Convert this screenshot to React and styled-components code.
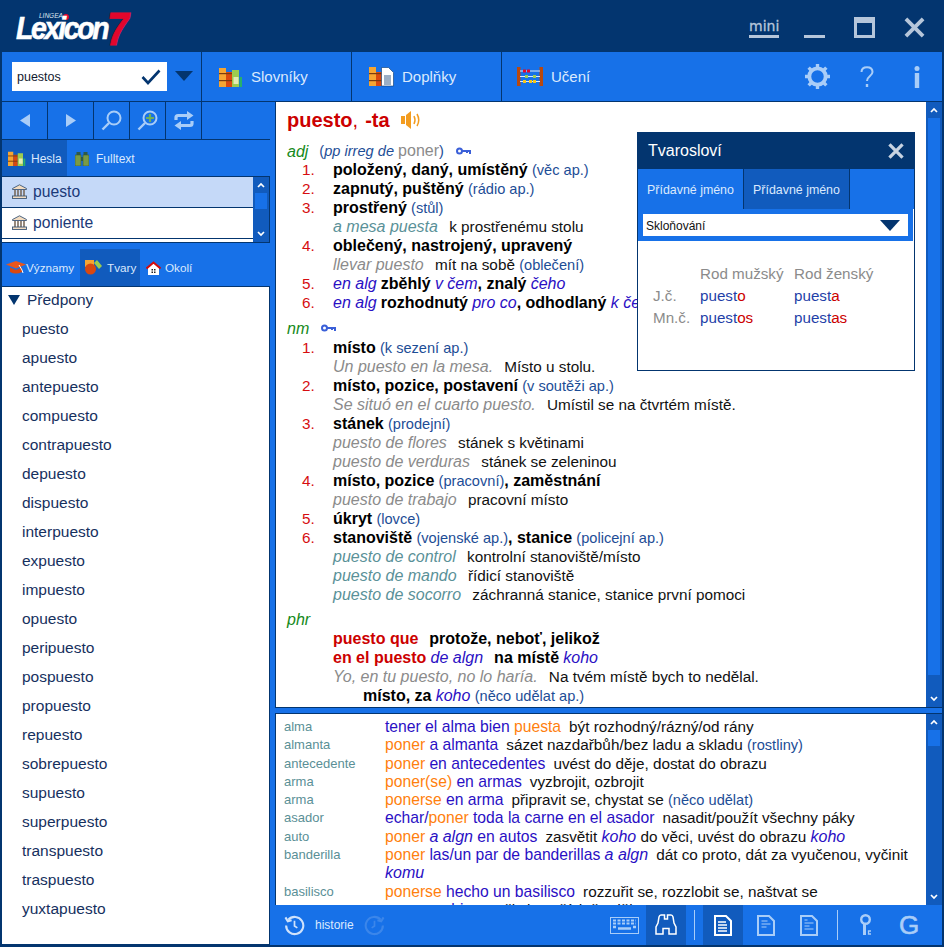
import React from 'react';
import styled, { createGlobalStyle } from 'styled-components';

const DARK = '#03356f';
const BLUE = '#1771e8';
const MID = '#115bbd';
const ICON = '#a9cdf8';
const LABEL = '#dbe9fd';

const Global = createGlobalStyle`
  html, body { margin: 0; padding: 0; background: ${DARK}; }
  * { box-sizing: border-box; }
  body { font-family: "Liberation Sans", Arial, sans-serif; }
`;

const Shell = styled.div`
  width: 944px; height: 947px; display: flex; flex-direction: column;
  background: ${BLUE}; border: 2px solid ${DARK}; border-top: 0; overflow: hidden;
`;
const TitleBar = styled.header`
  height: 52px; flex: none; background: ${DARK}; display: flex; align-items: flex-start; justify-content: space-between;
  margin: 0 -2px; padding: 0 19px 0 16px;
`;
const Logo = styled.div`
  position: relative; width: 114px; height: 36px; margin-top: 11px; display: flex; align-items: flex-end;
`;
const LogoWord = styled.span`
  font: italic 700 32px/18px "Liberation Sans", sans-serif; color: #fff; letter-spacing: -2.6px; -webkit-text-stroke: .6px #fff;
  transform: scaleX(.89); transform-origin: left; margin-bottom: 10px; white-space: nowrap; width: 91px;
`;
const LogoSeven = styled.span`
  position: absolute; left: 91px; top: 1px; font: italic 700 46px/35px "Liberation Sans", sans-serif; color: #e2062c; -webkit-text-stroke: 1px #e2062c;
  transform: scaleX(.85); transform-origin: left;
`;
const LogoBrand = styled.span`
  position: absolute; left: 23px; top: 2px; font: italic 400 6.500px/6px "Liberation Sans", sans-serif; color: #dfe6f0;
`;
const LogoDot = styled.span`
  position: absolute; left: 47px; top: 3px; width: 6px; height: 6px; border-radius: 50%; background: #e2062c;
`;
const WinControls = styled.div`
  display: flex; align-items: flex-start; gap: 29px; height: 21px; margin-top: 17px;
`;
const Mini = styled.span`
  font: 400 14px/15px "DejaVu Sans", sans-serif; color: #b6c6da; -webkit-text-stroke: .3px #b6c6da; border-bottom: 3px solid #b6c6da; height: 21px; width: 30px; margin-right: -4px; padding-top: 2px; text-align: center;
`;
const Svg = styled.svg`display: block; flex: none;`;
const InfoSvg = styled(Svg)`margin-left: 10px;`;

const Toolbar = styled.nav`
  height: 50px; flex: none; display: flex; border-bottom: 1px solid ${DARK};
`;
const SearchBox = styled.div`
  width: 200px; flex: none; border-right: 1px solid ${DARK}; display: flex; align-items: center; padding: 0 0 1px 10px;
`;
const InputBox = styled.div`
  width: 155px; height: 29px; background: #fff; display: flex; align-items: center; justify-content: space-between; padding: 1px 6px 0 5px;
  font: 12.5px/14px "Liberation Sans", sans-serif; color: #111a30;
`;
const DropBtn = styled.span`
  margin-left: 8px; width: 0; height: 0; border-left: 9px solid transparent; border-right: 9px solid transparent; border-top: 10px solid ${DARK};
`;
const ToolBtn = styled.div`
  width: 150px; flex: none; display: flex; align-items: center; gap: 8px; padding-left: ${p => p.$pad ?? 17}px; color: ${LABEL}; font-size: 15px;
  border-right: 1px solid ${p => (p.$last ? 'transparent' : DARK)};
`;
const ToolRight = styled.div`
  margin-left: auto; display: flex; align-items: center; gap: 30px; padding-right: 22px;
`;
const Main = styled.div`flex: 1; min-height: 0; display: flex;`;
const Left = styled.aside`
  width: 268px; flex: none; display: flex; flex-direction: column; margin-right: 5px;
`;
const NavRow = styled.div`
  height: 38px; flex: none; display: flex; border-bottom: 1px solid ${DARK};
`;
const NavBtn = styled.div`
  width: ${p => p.$w}px; flex: none; display: flex; align-items: center; justify-content: center; border-right: 1px solid ${DARK};
`;
const TabRow = styled.div`
  height: ${p => p.$h}px; flex: none; display: flex; align-items: stretch; color: ${LABEL}; font-size: ${p => p.$fs ?? 12}px; margin-top: ${p => p.$mt ?? 0}px;
`;
const LeftTab = styled.div`
  width: ${p => p.$w}px; display: flex; align-items: center; gap: ${p => p.$gap ?? 5}px; padding: ${p => p.$top ?? 0}px 0 0 ${p => p.$pad ?? 5}px; background: ${p => (p.$active ? MID : 'transparent')};
`;
const HeadList = styled.div`
  height: 67px; flex: none; display: flex; border: 1px solid ${DARK}; border-width: 1px 1px 1px 0; background: #fff;
`;
const HeadRows = styled.div`flex: 1; min-width: 0;`;
const HeadRow = styled.div`
  height: 31px; display: flex; align-items: center; gap: 6px; padding: 0 0 1px 10px; font-size: 15.7px; color: #1b3a78; border-bottom: 1px solid ${DARK};
  background: ${p => (p.$sel ? '#c5d9f8' : '#fff')};
`;
const Scroll = styled.div`
  width: 16px; flex: none; background: ${MID}; display: flex; flex-direction: column; align-items: center; padding: 5px 2px;
`;
const Thumb = styled.div`
  width: 100%; background: ${BLUE}; height: ${p => p.$h}px; margin-top: 5px;
`;
const Spacer = styled.div`flex: 1;`;
const Tree = styled.div`
  flex: 1; min-height: 0; background: #fff; border: 1px solid ${DARK}; border-left: 0; color: #16305e; font-size: 15.5px;
`;
const TreeHead = styled.div`
  height: 27px; padding: 0 0 1px 6px; display: flex; align-items: center; gap: 7px;
  &::before { content: ""; border-left: 6px solid transparent; border-right: 6px solid transparent; border-top: 10px solid ${DARK}; }
`;
const TreeItem = styled.div`
  height: 29px; line-height: 29px; padding-left: 20px;
`;
const Center = styled.section`
  flex: 1; min-width: 0; display: flex; flex-direction: column;
`;
const DictWrap = styled.div`
  position: relative; height: 606px; flex: none; display: flex; border-left: 1px solid ${DARK}; border-bottom: 1px solid ${DARK};
`;
const Dict = styled.article`
  flex: 1; min-width: 0; background: #fff; overflow: hidden; padding: 6px 0 0 11px; font-size: 15.3px; line-height: 19px; color: #111;
`;
const Head = styled.h1`
  margin: 0 0 10px; height: 24px; display: flex; align-items: center; font-size: 20px; line-height: 24px; font-weight: 700; color: #cc0000; white-space: pre;
`;
const Comma = styled.span`font-weight: 400; margin-right: 1.500px;`;
const Sec = styled.div`
  display: flex; align-items: center; height: ${p => p.$h ?? 19}px; margin-top: ${p => p.$mt ?? 0}px; white-space: pre;
`;
const KeyGap = styled.span`display: inline-block; width: ${p => p.$w}px;`;
const Pos = styled.i`color: #158a20; font-size: 16px;`;
const Sense = styled.div`
  display: flex; height: 19px; white-space: nowrap; padding-left: ${p => (p.$indent ? 30 : 0)}px;
`;
const Num = styled.span`
  width: 46px; flex: none; padding-left: 15px; color: #d60d10;
`;
const B = styled.b`color: #000; font-size: 16px;`;
const BR = styled.b`color: #cc0000; font-size: 16px;`;
const Note = styled.span`color: #1d4d96; font-size: 14.6px;`;
const Alg = styled.i`color: #2a0fc4; font-size: 16px;`;
const ExT = styled.i`color: #5a9198; font-size: 16px; margin-right: 7px;`;
const ExG = styled.i`color: #8b8b8b; font-size: 16px; margin-right: 7px;`;
const Gy = styled.span`color: #8b8b8b; font-size: 16px;`;
const Sp = styled.span`display: inline-block; width: 8px;`;
const WideGap = styled.span`display: inline-block; width: 11px;`;

const Popup = styled.div`
  position: absolute; left: 361px; top: 30px; width: 278px; height: 239px; background: #fff; border: 1px solid ${DARK}; display: flex; flex-direction: column;
`;
const PopHead = styled.div`
  height: 37px; margin: -1px -1px 0; flex: none; background: ${DARK}; color: #fff; display: flex; align-items: center; justify-content: space-between; padding: 1px 11px 0; font-size: 16px;
`;
const PopTabs = styled.div`
  height: 40px; flex: none; display: flex; background: ${BLUE}; color: ${LABEL}; font-size: 12.4px;
`;
const PopTab = styled.div`
  width: 106px; display: flex; align-items: center; justify-content: center; padding-top: 1px; background: ${p => (p.$active ? BLUE : MID)}; border-right: 1px solid ${DARK};
`;
const PopSel = styled.div`
  height: 32px; flex: none; background: ${BLUE}; padding: 5px; margin-right: 1px;
`;
const PopInput = styled.div`
  height: 22px; background: #fff; display: flex; align-items: center; justify-content: space-between; padding: 0 8px 0 3px; font: 12px "Liberation Sans", sans-serif; color: #111;
  &::after { content: ""; border-left: 10px solid transparent; border-right: 10px solid transparent; border-top: 11px solid ${DARK}; }
`;
const PopInputText = styled.span`padding-top: 2px;`;
const FormTable = styled.div`
  display: grid; grid-template-columns: 47px 94px auto; grid-auto-rows: 22px; padding: 22px 0 0 15px; font-size: 15.2px; line-height: 22px; color: #8b8b8b;
`;
const Stem = styled.span`color: #1f3fa8;`;
const End = styled.span`color: #cc0000;`;

const Gap = styled.div`height: 5px; flex: none;`;
const Lower = styled.div`
  height: 192px; flex: none; display: flex; border: 1px solid ${DARK}; border-width: 1px 0 0 1px; overflow: hidden;
`;
const LowerList = styled.div`
  flex: 1; min-width: 0; background: #fff; overflow: hidden; padding: 4px 0 0 8px;
`;
const LRow = styled.div`
  display: grid; grid-template-columns: 101px 1fr; font-size: 15.3px; line-height: 18.3px; color: #111;
`;
const Term = styled.span`font-size: 13px; color: #5a8f96;`;
const Or = styled.span`color: #ff7f0e; font-size: 15.7px;`;
const Bl = styled.span`color: #2a0fc4; font-size: 15.7px;`;
const BlI = styled.i`color: #2a0fc4; font-size: 16px;`;

const Bottom = styled.footer`
  height: 40px; flex: none; display: flex; align-items: stretch; padding-right: 8px;
`;
const Hist = styled.div`
  display: flex; align-items: center; gap: 10px; padding-left: 9px; font-size: 12px; color: #dbe9fd; flex: 1;
`;
const BBtn = styled.div`
  width: ${p => p.$w}px; flex: none; display: flex; align-items: center; justify-content: center; background: ${p => (p.$active ? MID : 'transparent')};
`;
const GMark = styled.span`
  font: 400 26px/26px "Liberation Sans", sans-serif; color: ${ICON}; -webkit-text-stroke: .6px ${ICON};
`;
const Divider = styled.div`width: 1px; background: #a9cdf8; margin: 5px 8px; flex: none;`;

const Books = ({ s = 1 }) => (
  <Svg width={24 * s} height={20 * s} viewBox="0 0 24 20">
    <rect x="0" y="1" width="7" height="19" fill="#f6a532" /><rect x="7" y="5" width="6" height="15" fill="#d9480f" />
    <rect x="0" y="6" width="13" height="1.200" fill="#7a3a10" /><rect x="0" y="13" width="13" height="1.200" fill="#7a3a10" />
    <rect x="13" y="3" width="7" height="17" fill="#9ccc50" /><rect x="14.500" y="10" width="5" height="7" fill="#e3ebb5" />
    <rect x="20.500" y="10" width="2.500" height="10" fill="#28b06a" />
  </Svg>
);
const Notebook = () => (
  <Svg width="25" height="20" viewBox="0 0 25 20">
    <rect x="0" y="0" width="7" height="19" fill="#f6a532" /><rect x="7" y="5" width="6" height="14" fill="#d9480f" />
    <rect x="0" y="6" width="13" height="1.200" fill="#7a3a10" /><rect x="0" y="13" width="13" height="1.200" fill="#7a3a10" />
    <path d="M12.500.5h7l5 5v13.500h-12z" fill="#fff" stroke={DARK} strokeWidth=".6" />
    <path d="M15 9h7M15 11h7M15 13h7M15 15h7M15 17h7" stroke={DARK} strokeWidth=".8" />
  </Svg>
);
const Abacus = () => (
  <Svg width="26" height="20" viewBox="0 0 26 20">
    <rect x="0" y="0" width="3.500" height="19" fill="#b8480f" /><rect x="22.500" y="0" width="3.500" height="19" fill="#b8480f" />
    <path d="M3 4h20M3 9.500h20M3 14.500h20" stroke="#dbe9fd" strokeWidth="1" />
    <path d="M6 4h3M10 4h3" stroke="#e2062c" strokeWidth="3" /><path d="M8 9.500h3M16 9.500h3" stroke="#9ccc50" strokeWidth="3" /><path d="M6 14.500h3M12 14.500h3M16 14.500h3" stroke="#f5c518" strokeWidth="3" />
  </Svg>
);
const Bank = () => (
  <Svg width="15" height="15" viewBox="0 0 15 15">
    <path d="M7.500.8 14.500 4.500v1H.5v-1z" fill="#f3dcc0" stroke="#3d5878" strokeWidth=".9" />
    <path d="M3 6v6M6 6v6M9 6v6M12 6v6" stroke="#6d5a48" strokeWidth="1.400" />
    <rect x=".5" y="12" width="14" height="2.500" fill="#f3dcc0" stroke="#3d5878" strokeWidth=".9" />
  </Svg>
);
const Search = ({ plus }) => (
  <Svg width="21" height="21" viewBox="0 0 21 21" fill="none">
    <circle cx="13" cy="8" r="6.500" stroke={ICON} strokeWidth="2" /><path d="M8 13 1.500 19.500" stroke={ICON} strokeWidth="2.400" />
    {plus && <path d="M13 4v8M9 8h8" stroke="#6fb05a" strokeWidth="2.200" />}
  </Svg>
);
const Sync = () => (
  <Svg width="20" height="19" viewBox="0 0 20 19" fill="none" stroke={ICON} strokeWidth="3.200">
    <path d="M2 9V6.500q0-2 2-2h10" /><path d="M18 10v2.500q0 2-2 2H6" />
    <path d="M13 0 19.500 4.500 13 9zM7 10 .5 14.500 7 19z" fill={ICON} stroke="none" />
  </Svg>
);
const FieldGlass = () => (
  <Svg width="14" height="14" viewBox="0 0 14 14">
    <rect x="1.500" y="0" width="4" height="3" fill="#2d5a4a" /><rect x="8.500" y="0" width="4" height="3" fill="#2d5a4a" />
    <rect x="0" y="3" width="6" height="11" fill="#7a9a45" stroke="#3c5a30" strokeWidth=".6" /><rect x="8" y="3" width="6" height="11" fill="#7a9a45" stroke="#3c5a30" strokeWidth=".6" />
    <rect x="6" y="5" width="2" height="4" fill="#2d5a4a" />
  </Svg>
);
const BinoOutline = () => (
  <Svg width="22" height="22" viewBox="0 0 22 22" fill="none" stroke="#fff" strokeWidth="1.500">
    <path d="M6 1h3.500v4h3V1H16q1.500 0 2 2l1 6 2 4v7h-7v-5.500H8V20H1v-7l2-4 1-6q.5-2 2-2z" />
  </Svg>
);
const Close = ({ size = 21, color = '#b6c6da', w = 4 }) => (
  <Svg width={size} height={size} viewBox="0 0 22 22"><path d="M2 2 20 20M20 2 2 20" stroke={color} strokeWidth={w} /></Svg>
);
const Key = () => (
  <Svg width="15" height="9" viewBox="0 0 15 9" fill="none"><circle cx="3.500" cy="4" r="2.500" stroke="#3a5fd8" strokeWidth="2" /><path d="M6 4h8v3M11 4v2" stroke="#3a5fd8" strokeWidth="2" /></Svg>
);
const Speaker = () => (
  <Svg width="21" height="18" viewBox="0 0 21 18" fill="none">
    <path d="M0 5h4v8H0zM5 4l5-4v18l-5-4z" fill="#f39c1f" /><path d="M13 5q2 4 0 8M16 3q3.500 6 0 12" stroke="#f39c1f" strokeWidth="1.500" />
  </Svg>
);
const Chev = ({ up }) => (
  <Svg width="8" height="6" viewBox="0 0 8 6" fill="none"><path d={up ? 'M1 5 4 2l3 3' : 'M1 1l3 3 3-3'} stroke="#fff" strokeWidth="1.700" /></Svg>
);
const Gear = () => (
  <Svg width="25" height="25" viewBox="0 0 26 26" fill="none">
    <circle cx="13" cy="13" r="8.500" stroke={ICON} strokeWidth="4" />
    <path d="M13 0v4M13 22v4M0 13h4M22 13h4M3.800 3.800l3 3M19.200 19.200l3 3M3.800 22.200l3-3M19.200 6.800l3-3" stroke={ICON} strokeWidth="3.500" />
  </Svg>
);
const History = ({ color, flip }) => (
  <Svg width="21" height="21" viewBox="0 0 22 22" fill="none" stroke={color} strokeWidth="2.200" style={flip ? { transform: 'scaleX(-1)' } : undefined}>
    <path d="M4.500 5A9 9 0 1 1 2.200 11" /><path d="M1.500 2.500 4 6.500l4-1" /><path d="M11 6v5.500l3 2" strokeWidth="1.800" />
  </Svg>
);
const Keyboard = () => (
  <Svg width="29" height="17" viewBox="0 0 29 17" fill="none">
    <rect x=".5" y=".5" width="28" height="16" stroke={ICON} />
    <path d="M3 3.500h23M3 6.500h23" stroke={ICON} strokeWidth="2" strokeDasharray="3 1.500" />
    <path d="M3 10h3M23 10h3M8 11.500h13" stroke={ICON} strokeWidth="2.500" />
  </Svg>
);
const Doc = ({ color = ICON, lines, w = 1 }) => (
  <Svg width="18" height="21" viewBox="0 0 18 21" fill="none" stroke={color}>
    <path d="M1 1h11l5 5v14H1z" strokeWidth="2" /><path d={lines} strokeWidth={w} />
  </Svg>
);
const LockKey = () => (
  <Svg width="13" height="22" viewBox="0 0 13 22" fill="none" stroke={ICON} strokeWidth="2.400">
    <circle cx="6.500" cy="5.500" r="4.300" /><path d="M5.500 10v11" strokeWidth="3" /><path d="M12 17H9.500v3H12" strokeWidth="1.300" />
  </Svg>
);
const Cap = () => (
  <Svg width="20" height="13" viewBox="0 0 20 13">
    <path d="M0 3.500 10 0l10 3.500-10 4z" fill="#e8561c" /><path d="M4 6.500V11q6 3 12 0V6.500l-6 2.500z" fill="#d9480f" />
    <path d="M13 4l3 5 1 3" stroke="#fff" fill="none" />
  </Svg>
);
const Shapes = () => (
  <Svg width="17" height="15" viewBox="0 0 17 15">
    <rect x="0" y="0" width="9" height="7" fill="#f6a532" /><path d="M9 3l3-3 5 6-3 3z" fill="#9ccc50" /><circle cx="5.500" cy="9" r="5.500" fill="#d9480f" />
  </Svg>
);
const House = () => (
  <Svg width="15" height="14" viewBox="0 0 15 14">
    <path d="M2 7l5.500-5L13 7v7H2z" fill="#fff" /><path d="M.5 7.500l7-6 7 6" fill="none" stroke="#d40b0b" strokeWidth="2" />
    <path d="M5.500 8H7v1.500H5.500zM8 8h1.500v1.500H8zM5.500 10.500H7V12H5.500zM8 10.500h1.500V12H8z" fill="#222" />
  </Svg>
);

const words = ['puesto','apuesto','antepuesto','compuesto','contrapuesto','depuesto','dispuesto','interpuesto','expuesto','impuesto','opuesto','peripuesto','pospuesto','propuesto','repuesto','sobrepuesto','supuesto','superpuesto','transpuesto','traspuesto','yuxtapuesto'];

const Row = ({ n, indent, children }) => <Sense $indent={indent}><Num>{n}</Num><span>{children}</span></Sense>;

export default function App() {
  return (
    <Shell>
      <Global />
      <TitleBar>
        <Logo>
          <LogoBrand>LINGEA</LogoBrand><LogoDot />
          <LogoWord>Lexicon</LogoWord><LogoSeven>7</LogoSeven>
        </Logo>
        <WinControls>
          <Mini>mini</Mini>
          <Svg width="21" height="21" viewBox="0 0 21 21"><rect x="0" y="18" width="21" height="3" fill="#b6c6da" /></Svg>
          <Svg width="21" height="21" viewBox="0 0 21 21"><path d="M0 0h21v21H0zM3 6v12h15V6z" fill="#b6c6da" fillRule="evenodd" /></Svg>
          <Close />
        </WinControls>
      </TitleBar>
      <Toolbar>
        <SearchBox>
          <InputBox>puestos
            <Svg width="20" height="16" viewBox="0 0 20 16" fill="none"><path d="M1.500 8 7 14 18.500 1.500" stroke={DARK} strokeWidth="2.600" /></Svg>
          </InputBox>
          <DropBtn />
        </SearchBox>
        <ToolBtn><Books />Slovníky</ToolBtn>
        <ToolBtn><Notebook />Doplňky</ToolBtn>
        <ToolBtn $last $pad={15}><Abacus />Učení</ToolBtn>
        <ToolRight>
          <Gear />
          <Svg width="14" height="22" viewBox="0 0 14 22" fill="none"><path d="M1.500 6Q1.500 1.200 7 1.200T12.500 6c0 4-5.500 4-5.500 9" stroke={ICON} strokeWidth="2" /><rect x="5.800" y="18" width="2.400" height="3" fill={ICON} /></Svg>
          <InfoSvg width="6" height="22" viewBox="0 0 6 22"><circle cx="3" cy="2.500" r="2.500" fill={ICON} /><rect x=".8" y="7" width="4.400" height="15" fill={ICON} /></InfoSvg>
        </ToolRight>
      </Toolbar>
      <Main>
        <Left>
          <NavRow>
            <NavBtn $w={46}><Svg width="10" height="13" viewBox="0 0 10 13"><path d="M10 0v13L0 6.500z" fill={ICON} /></Svg></NavBtn>
            <NavBtn $w={46}><Svg width="10" height="13" viewBox="0 0 10 13"><path d="M0 0v13l10-6.500z" fill={ICON} /></Svg></NavBtn>
            <NavBtn $w={36}><Search /></NavBtn>
            <NavBtn $w={36}><Search plus /></NavBtn>
            <NavBtn $w={36}><Sync /></NavBtn>
          </NavRow>
          <TabRow $h={36}>
            <LeftTab $w={65} $active $pad={6} $top={1}><Books s={.75} />Hesla</LeftTab>
            <LeftTab $w={90} $pad={8} $gap={7} $top={1}><FieldGlass />Fulltext</LeftTab>
          </TabRow>
          <HeadList>
            <HeadRows>
              <HeadRow $sel><Bank />puesto</HeadRow>
              <HeadRow><Bank />poniente</HeadRow>
            </HeadRows>
            <Scroll><Chev up /><Thumb $h={16} /><Spacer /><Chev /></Scroll>
          </HeadList>
          <TabRow $h={37} $mt={6} $fs={11.7}>
            <LeftTab $w={78} $pad={4} $gap={0}><Cap />Významy</LeftTab>
            <LeftTab $w={60} $active $pad={5} $gap={5}><Shapes />Tvary</LeftTab>
            <LeftTab $w={80} $pad={6} $gap={4}><House />Okolí</LeftTab>
          </TabRow>
          <Tree>
            <TreeHead>Předpony</TreeHead>
            {words.map(w => <TreeItem key={w}>{w}</TreeItem>)}
          </Tree>
        </Left>
        <Center>
          <DictWrap>
            <Dict>
              <Head>puesto<Comma>,</Comma> -ta<WideGap /><Speaker /></Head>
              <Sec $h={18}><Pos>adj</Pos><KeyGap $w={11} /><Note>(<i>pp irreg de</i> <Gy>poner</Gy>)</Note><KeyGap $w={12} /><Key /></Sec>
              <Row n="1."><B>položený, daný, umístěný</B> <Note>(věc ap.)</Note></Row>
              <Row n="2."><B>zapnutý, puštěný</B> <Note>(rádio ap.)</Note></Row>
              <Row n="3."><B>prostřený</B> <Note>(stůl)</Note></Row>
              <Row><ExT>a mesa puesta</ExT> k prostřenému stolu</Row>
              <Row n="4."><B>oblečený, nastrojený, upravený</B></Row>
              <Row><ExG>llevar puesto</ExG> mít na sobě <Note>(oblečení)</Note></Row>
              <Row n="5."><Alg>en alg</Alg> <B>zběhlý</B> <Alg>v čem</Alg><B>, znalý</B> <Alg>čeho</Alg></Row>
              <Row n="6."><Alg>en alg</Alg> <B>rozhodnutý</B> <Alg>pro co</Alg><B>, odhodlaný</B> <Alg>k čemu</Alg></Row>
              <Sec $mt={7}><Pos>nm</Pos><KeyGap $w={12} /><Key /></Sec>
              <Row n="1."><B>místo</B> <Note>(k sezení ap.)</Note></Row>
              <Row><ExG>Un puesto en la mesa.</ExG> Místo u stolu.</Row>
              <Row n="2."><B>místo, pozice, postavení</B> <Note>(v soutěži ap.)</Note></Row>
              <Row><ExG>Se situó en el cuarto puesto.</ExG> Umístil se na čtvrtém místě.</Row>
              <Row n="3."><B>stánek</B> <Note>(prodejní)</Note></Row>
              <Row><ExG>puesto de flores</ExG> stánek s květinami</Row>
              <Row><ExG>puesto de verduras</ExG> stánek se zeleninou</Row>
              <Row n="4."><B>místo, pozice</B> <Note>(pracovní)</Note><B>, zaměstnání</B></Row>
              <Row><ExG>puesto de trabajo</ExG> pracovní místo</Row>
              <Row n="5."><B>úkryt</B> <Note>(lovce)</Note></Row>
              <Row n="6."><B>stanoviště</B> <Note>(vojenské ap.)</Note><B>, stanice</B> <Note>(policejní ap.)</Note></Row>
              <Row><ExT>puesto de control</ExT> kontrolní stanoviště/místo</Row>
              <Row><ExT>puesto de mando</ExT> řídicí stanoviště</Row>
              <Row><ExT>puesto de socorro</ExT> záchranná stanice, stanice první pomoci</Row>
              <Sec $mt={6}><Pos>phr</Pos></Sec>
              <Row><BR>puesto que</BR><WideGap /><B>protože, neboť, jelikož</B></Row>
              <Row><BR>en el puesto</BR> <Alg>de algn</Alg><WideGap /><B>na místě</B> <Alg>koho</Alg></Row>
              <Row><ExG>Yo, en tu puesto, no lo haría.</ExG> Na tvém místě bych to nedělal.</Row>
              <Row indent><B>místo, za</B> <Alg>koho</Alg> <Note>(něco udělat ap.)</Note></Row>
            </Dict>
            <Scroll><Chev up /><Thumb $h={557} /><Spacer /><Chev /></Scroll>
            <Popup>
              <PopHead>Tvarosloví<Close size={16} color="#c7d3e2" w={4.500} /></PopHead>
              <PopTabs><PopTab $active>Přídavné jméno</PopTab><PopTab>Přídavné jméno</PopTab></PopTabs>
              <PopSel><PopInput><PopInputText>Skloňování</PopInputText></PopInput></PopSel>
              <FormTable>
                <span /><span>Rod mužský</span><span>Rod ženský</span>
                <span>J.č.</span><span><Stem>puest</Stem><End>o</End></span><span><Stem>puest</Stem><End>a</End></span>
                <span>Mn.č.</span><span><Stem>puest</Stem><End>os</End></span><span><Stem>puest</Stem><End>as</End></span>
              </FormTable>
            </Popup>
          </DictWrap>
          <Gap />
          <Lower>
            <LowerList>
              <LRow><Term>alma</Term><span><Bl>tener el alma bien</Bl> <Or>puesta</Or><Sp />být rozhodný/rázný/od rány</span></LRow>
              <LRow><Term>almanta</Term><span><Or>poner</Or> <Bl>a almanta</Bl><Sp />sázet nazdařbůh/bez ladu a skladu <Note>(rostliny)</Note></span></LRow>
              <LRow><Term>antecedente</Term><span><Or>poner</Or> <Bl>en antecedentes</Bl><Sp />uvést do děje, dostat do obrazu</span></LRow>
              <LRow><Term>arma</Term><span><Or>poner(se)</Or> <Bl>en armas</Bl><Sp />vyzbrojit, ozbrojit</span></LRow>
              <LRow><Term>arma</Term><span><Or>ponerse</Or> <Bl>en arma</Bl><Sp />připravit se, chystat se <Note>(něco udělat)</Note></span></LRow>
              <LRow><Term>asador</Term><span><Bl>echar/</Bl><Or>poner</Or> <Bl>toda la carne en el asador</Bl><Sp />nasadit/použít všechny páky</span></LRow>
              <LRow><Term>auto</Term><span><Or>poner</Or> <BlI>a algn</BlI> <Bl>en autos</Bl><Sp />zasvětit <BlI>koho</BlI> do věci, uvést do obrazu <BlI>koho</BlI></span></LRow>
              <LRow><Term>banderilla</Term><span><Or>poner</Or> <Bl>las/un par de banderillas</Bl> <BlI>a algn</BlI><Sp />dát co proto, dát za vyučenou, vyčinit <BlI>komu</BlI></span></LRow>
              <LRow><Term>basilisco</Term><span><Or>ponerse</Or> <Bl>hecho un basilisco</Bl><Sp />rozzuřit se, rozzlobit se, naštvat se</span></LRow>
              <LRow><Term>bien</Term><span><Or>poner</Or> <Bl>en bien</Bl><Sp />vyčistit, pořádně udělat</span></LRow>
            </LowerList>
            <Scroll><Chev up /><Thumb $h={16} /><Spacer /><Chev /></Scroll>
          </Lower>
          <Bottom>
            <Hist><History color="#cfe2fb" />historie<History color="#3b86ea" flip /></Hist>
            <BBtn $w={44}><Keyboard /></BBtn>
            <BBtn $w={40} $active><BinoOutline /></BBtn>
            <Divider />
            <BBtn $w={40} $active><Doc color="#fff" lines="M4 7h8M4 10h9M4 13h9M4 16h9" w={1.600} /></BBtn>
            <BBtn $w={46}><Doc lines="M4.500 6h6M4.500 9h9M4.500 12h5" /></BBtn>
            <BBtn $w={40}><Doc lines="M4.500 5h3M4.500 8h9M4.500 11h5M4.500 14h9" /></BBtn>
            <Divider />
            <BBtn $w={38}><LockKey /></BBtn>
            <BBtn $w={50}><GMark>G</GMark></BBtn>
          </Bottom>
        </Center>
      </Main>
    </Shell>
  );
}
